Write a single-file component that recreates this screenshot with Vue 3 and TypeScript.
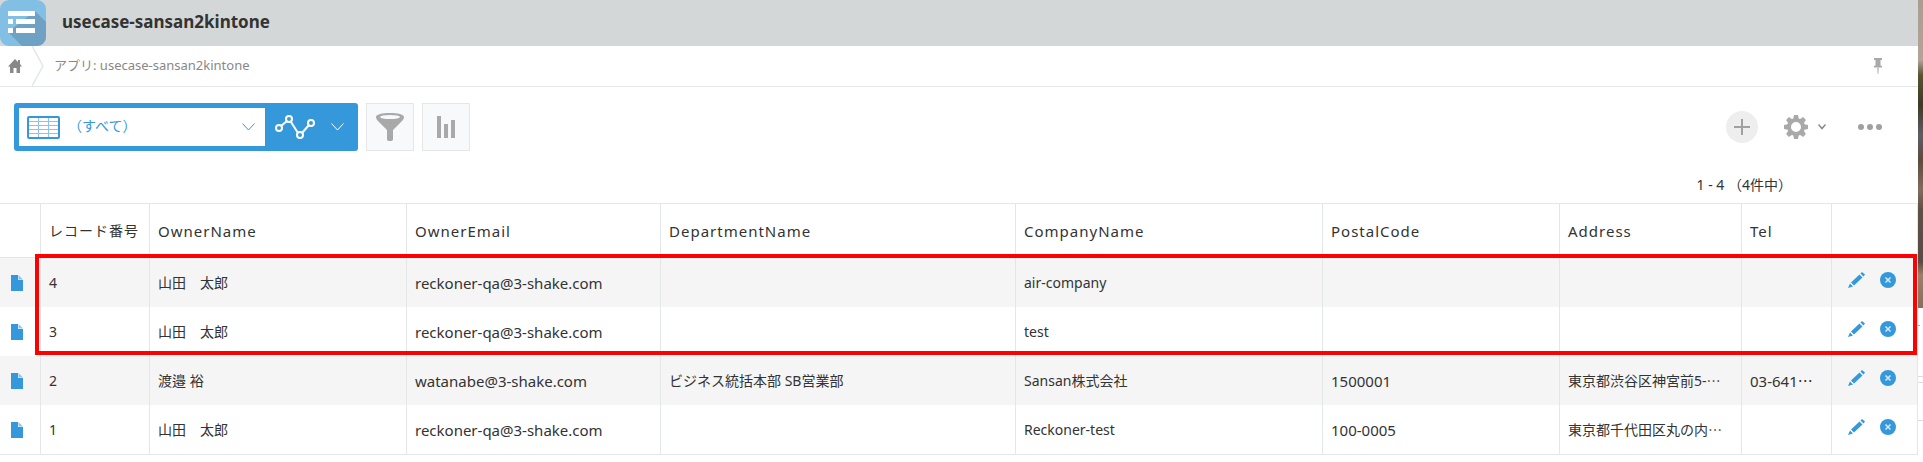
<script setup lang="ts">
interface AppRecord {
  id: string
  owner: string
  email: string
  department: string
  company: string
  postal: string
  address: string
  tel: string
}

interface Column {
  key: keyof AppRecord
  label: string
}

const columns: Column[] = [
  { key: 'id', label: 'レコード番号' },
  { key: 'owner', label: 'OwnerName' },
  { key: 'email', label: 'OwnerEmail' },
  { key: 'department', label: 'DepartmentName' },
  { key: 'company', label: 'CompanyName' },
  { key: 'postal', label: 'PostalCode' },
  { key: 'address', label: 'Address' },
  { key: 'tel', label: 'Tel' },
]

const records: AppRecord[] = [
  { id: '4', owner: '山田　太郎', email: 'reckoner-qa@3-shake.com', department: '', company: 'air-company', postal: '', address: '', tel: '' },
  { id: '3', owner: '山田　太郎', email: 'reckoner-qa@3-shake.com', department: '', company: 'test', postal: '', address: '', tel: '' },
  { id: '2', owner: '渡邉 裕', email: 'watanabe@3-shake.com', department: 'ビジネス統括本部 SB営業部', company: 'Sansan株式会社', postal: '1500001', address: '東京都渋谷区神宮前5-⋯', tel: '03-641⋯' },
  { id: '1', owner: '山田　太郎', email: 'reckoner-qa@3-shake.com', department: '', company: 'Reckoner-test', postal: '100-0005', address: '東京都千代田区丸の内⋯', tel: '' },
]
</script>

<template>
  <div class="screen">
    <main class="app">
      <header class="title-bar">
        <svg class="logo" viewBox="0 0 46 46" aria-hidden="true">
          <rect width="46" height="46" rx="9" fill="#82bfe5" />
          <path d="M35 11 46 22V37a9 9 0 0 1-9 9H22L8 32Z" fill="#6ea1c4" />
          <path d="M8 11h27v5H8ZM8 19h5v5H8ZM16 19h19v5H16ZM8 28h5v5H8ZM16 28h19v5H16Z" fill="#fff" />
        </svg>
        <h1>usecase-sansan2kintone</h1>
      </header>

      <nav class="crumbs" aria-label="Breadcrumb">
        <a class="home" href="#" aria-label="Home">
          <svg width="14" height="14" viewBox="0 0 14 14"><path d="M7 0 10 3V1h2v4l2 2.500h-2V14H8.500V9h-3v5H2V7.500H0Z" fill="#888" /></svg>
        </a>
        <svg class="divider" width="12" height="40" viewBox="0 0 12 40" aria-hidden="true"><path d="M0 0 11 20 0 40" fill="none" stroke="#e3e7e8" stroke-width="1.500" /></svg>
        <a class="crumb" href="#">アプリ: usecase-sansan2kintone</a>
        <button class="plain pin" type="button" aria-label="Pin">
          <svg width="8" height="16" viewBox="0 0 8 16"><path d="M0 0h8v2H6.500v5.500L8 8v1.500H0V8l1.500-.5V2H0Z" fill="#a9a9a9" /><path d="M3 9.500h2L4.500 16h-1Z" fill="#c4c4c4" /></svg>
        </button>
      </nav>

      <div class="toolbar">
        <div class="views">
          <button class="view-select" type="button">
            <svg width="33" height="23" viewBox="0 0 33 23" aria-hidden="true">
              <rect x="1" y="1" width="31" height="21" rx="1" fill="#fff" stroke="#3498db" stroke-width="2" />
              <path d="M2 5.500h29M2 9.500h29M2 13.500h29M2 17.500h29M11.500 2v19M21.500 2v19" stroke="#8cc4ea" />
            </svg>
            <span>（すべて）</span>
            <svg class="caret" width="13" height="8" viewBox="0 0 13 8" aria-hidden="true"><path d="m.5.5 6 6.500 6-6.500" fill="none" stroke="#3498db" /></svg>
          </button>
          <button class="graph-select" type="button" aria-label="Graph">
            <svg width="40" height="25" viewBox="0 0 40 25" fill="none" stroke="#fff" stroke-width="2">
              <path d="m6 11 6-5M16 7l7 11M27 18l7-8" />
              <circle cx="4" cy="13" r="3" /><circle cx="14" cy="4" r="3" /><circle cx="25" cy="20" r="3" /><circle cx="36" cy="8" r="3" />
            </svg>
            <svg width="13" height="8" viewBox="0 0 13 8"><path d="m.5.5 6 6.500 6-6.500" fill="none" stroke="#fff" /></svg>
          </button>
        </div>
        <button class="square" type="button" aria-label="Filter">
          <svg width="28" height="28" viewBox="0 0 28 28"><path d="M0 4C0 1.500 6 0 14 0s14 1.500 14 4c0 1.500-1 3-2.500 4.500L17 17v9.500c0 2-6 2-6 0V17L2.500 8.500C1 7 0 5.500 0 4Z" fill="#a9a9a9" /><ellipse cx="14" cy="4" rx="10" ry="2" fill="#f7f9fa" /></svg>
        </button>
        <button class="square" type="button" aria-label="Chart">
          <svg width="18" height="22" viewBox="0 0 18 22"><path d="M0 0h4v22H0ZM7 8h4v14H7ZM14 4h4v18h-4Z" fill="#a9a9a9" /></svg>
        </button>
        <div class="tools">
          <button class="plain" type="button" aria-label="Add record">
            <svg width="32" height="32" viewBox="0 0 32 32"><circle cx="16" cy="16" r="16" fill="#eee" /><path d="M16 8v16M8 16h16" stroke="#a0a0a0" stroke-width="2" /></svg>
          </button>
          <button class="plain gear" type="button" aria-label="Settings">
            <svg width="24" height="24" viewBox="0 0 24 24">
              <g fill="#a9a9a9">
                <path d="M10 0h4l1 5H9ZM10 24h4l1-5H9ZM0 10v4l5 1V9ZM24 10v4l-5 1V9Z" />
                <path d="M10 0h4l1 5H9ZM10 24h4l1-5H9ZM0 10v4l5 1V9ZM24 10v4l-5 1V9Z" transform="rotate(45 12 12)" />
              </g>
              <circle cx="12" cy="12" r="7" fill="none" stroke="#a9a9a9" stroke-width="4" />
            </svg>
            <svg width="8" height="6" viewBox="0 0 8 6"><path d="m.5.5 3.500 4 3.500-4" fill="none" stroke="#888" stroke-width="1.500" /></svg>
          </button>
          <button class="plain" type="button" aria-label="More">
            <svg width="24" height="6" viewBox="0 0 24 6" fill="#a0a0a0"><circle cx="3" cy="3" r="3" /><circle cx="12" cy="3" r="3" /><circle cx="21" cy="3" r="3" /></svg>
          </button>
        </div>
      </div>

      <div class="pager">1 - 4 （4件中）</div>

      <div class="listing">
        <table>
          <colgroup>
            <col class="c-open" /><col class="c-id" /><col class="c-owner" /><col class="c-email" /><col class="c-department" />
            <col class="c-company" /><col class="c-postal" /><col class="c-address" /><col class="c-tel" /><col class="c-actions" />
          </colgroup>
          <thead>
            <tr>
              <td></td>
              <th v-for="column in columns" :key="column.key" :class="column.key" scope="col">{{ column.label }}</th>
              <td></td>
            </tr>
          </thead>
          <tbody>
            <tr v-for="record in records" :key="record.id">
              <td class="open">
                <a href="#" :aria-label="`Open record ${record.id}`">
                  <svg width="12" height="16" viewBox="0 0 12 16"><path d="M0 0h7v5h5v11H0Z" fill="#3498db" /><path d="M7.500 0 12 4.500H7.500Z" fill="#8fc6ec" /></svg>
                </a>
              </td>
              <td v-for="column in columns" :key="column.key" :class="column.key">{{ record[column.key] }}</td>
              <td>
                <div class="actions">
                  <button class="plain" type="button" :aria-label="`Edit record ${record.id}`">
                    <svg width="17" height="16" viewBox="0 0 17 16" fill="#3498db"><path d="M14 0 17 2.500 15.500 4.500 12.500 1.500ZM11.500 2.500l3 3L6 13.500l-3-3ZM2 11.500l3 3L0 16Z" /></svg>
                  </button>
                  <button class="plain" type="button" :aria-label="`Delete record ${record.id}`">
                    <svg width="16" height="16" viewBox="0 0 16 16"><circle cx="8" cy="8" r="8" fill="#3498db" /><path d="m5.500 5.500 5 5M10.500 5.500l-5 5" stroke="#d6eaf8" stroke-width="1.500" /></svg>
                  </button>
                </div>
              </td>
            </tr>
          </tbody>
        </table>
        <div class="highlight"></div>
      </div>
    </main>

    <div class="edge" aria-hidden="true">
      <div class="photo"></div>
      <svg width="5" height="154" viewBox="0 0 5 154"><path d="M0 17.500h2" stroke="#aaa" /><path d="M0 68.500h5M0 74.500h5M0 112.500h5" stroke="#ddd" /></svg>
    </div>
  </div>
</template>

<style>
body {
  margin: 0;
}
</style>

<style scoped>
.screen {
  display: flex;
  min-height: 100vh;
  background: #fff;
  color: #333;
  font-family: 'Noto Sans', 'Noto Sans CJK JP', sans-serif;
  font-size: 14px;
  line-height: 20px;
}

.screen svg {
  display: block;
  flex: none;
}

.app {
  flex: 1;
  min-width: 0;
}

button {
  font: inherit;
  cursor: pointer;
}

a {
  color: inherit;
  text-decoration: none;
}

.plain {
  display: flex;
  align-items: center;
  padding: 0;
  border: 0;
  background: none;
}

.title-bar {
  display: flex;
  align-items: center;
  gap: 16px;
  height: 46px;
  background: #d4d7d7;
}

.logo {
  width: 46px;
  height: 46px;
}

h1 {
  margin: 0;
  padding-bottom: 3px;
  font-size: 17px;
  font-weight: 700;
}

.crumbs {
  display: flex;
  align-items: center;
  height: 40px;
  border-bottom: 1px solid #e3e7e8;
  color: #888;
  font-size: 13px;
}

.home {
  padding: 0 10px 0 8px;
}

.crumb {
  padding: 0 0 2px 10px;
}

.pin {
  margin: 0 36px 0 auto;
}

.toolbar {
  display: flex;
  align-items: center;
  gap: 8px;
  padding: 16px 36px 16px 14px;
}

.views {
  display: flex;
  padding: 5px;
  border-radius: 3px;
  background: #3498db;
}

.view-select,
.graph-select {
  display: flex;
  align-items: center;
  height: 38px;
  border: 0;
}

.view-select {
  width: 246px;
  padding: 0 10px 0 8px;
  background: #fff;
  color: #3498db;
}

.view-select span {
  padding: 0 0 2px 8px;
}

.caret {
  margin-left: auto;
}

.graph-select {
  gap: 16px;
  width: 88px;
  padding: 0 10px;
  background: none;
}

.square {
  display: flex;
  align-items: center;
  justify-content: center;
  width: 48px;
  height: 48px;
  padding: 0;
  border: 1px solid #e3e7e8;
  background: #f7f9fa;
}

.tools {
  display: flex;
  align-items: center;
  gap: 26px;
  margin-left: auto;
}

.gear {
  gap: 10px;
  margin-right: 6px;
}

.pager {
  padding: 8px 126px 8px 0;
  text-align: right;
}

.listing {
  position: relative;
}

table {
  width: 100%;
  border-top: 1px solid #e3e7e8;
  border-bottom: 1px solid #e3e7e8;
  border-spacing: 0;
  table-layout: fixed;
}

th,
td {
  overflow: hidden;
  height: 49px;
  padding: 0 8px;
  border-right: 1px solid #e3e7e8;
  box-sizing: border-box;
  text-align: left;
  white-space: nowrap;
}

thead th,
thead td {
  height: 54px;
  border-bottom: 1px solid #e3e7e8;
}

th {
  font-size: 15px;
  font-weight: 400;
  letter-spacing: 1px;
}

th.id {
  font-size: 14px;
}

td.email,
td.postal,
td.tel {
  font-size: 15px;
}

tbody tr:nth-child(odd) {
  background: #f5f5f5;
}

.c-open { width: 41px; }
.c-id { width: 109px; }
.c-owner { width: 257px; }
.c-email { width: 254px; }
.c-department { width: 355px; }
.c-company { width: 307px; }
.c-postal { width: 237px; }
.c-address { width: 182px; }
.c-tel { width: 90px; }
.c-actions { width: 86px; }

.open {
  padding-left: 11px;
}

.actions {
  display: flex;
  gap: 15px;
  padding: 0 0 5px 8px;
}

.highlight {
  position: absolute;
  top: 51px;
  right: 1px;
  left: 35px;
  height: 101px;
  border: 4px solid #f00;
  box-sizing: border-box;
  pointer-events: none;
}

.edge {
  width: 5px;
}

.photo {
  height: 308px;
  background: linear-gradient(#a99c90 0, #b3a49a 60px, #55552f 75px, #3d3a25 105px, #5a5f66 135px, #5c4a3c 160px, #806c5a 190px, #5c5046 210px, #574c45 262px, #9a8068 275px, #84705c 308px);
}
</style>
